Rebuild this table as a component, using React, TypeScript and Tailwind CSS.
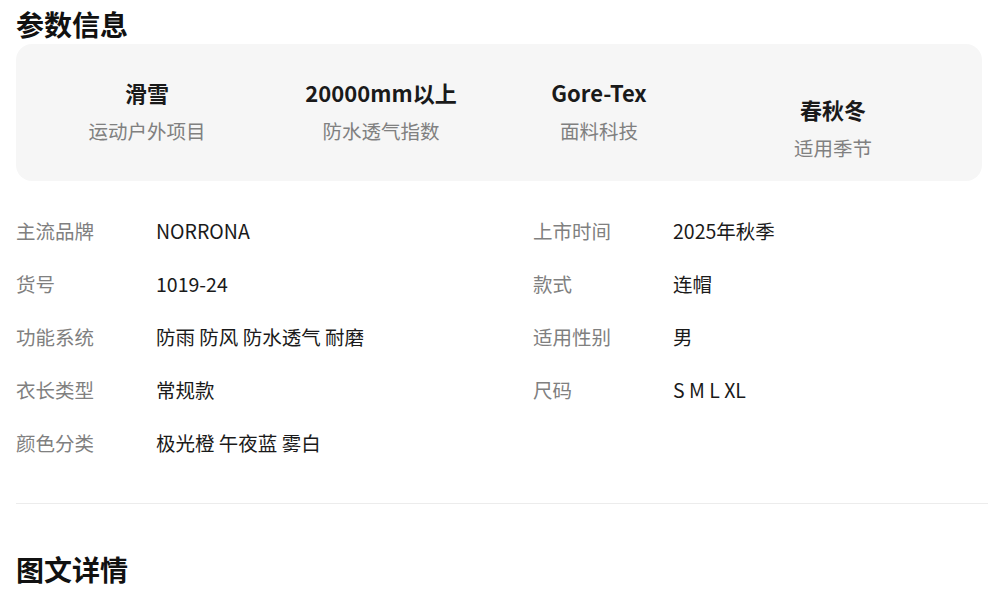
import React from 'react';

const highlights = [
  { value: '滑雪', label: '运动户外项目', offset: false },
  { value: '20000mm以上', label: '防水透气指数', offset: false },
  { value: 'Gore-Tex', label: '面料科技', offset: false },
  { value: '春秋冬', label: '适用季节', offset: true },
];

const leftSpecs = [
  ['主流品牌', 'NORRONA'],
  ['货号', '1019-24'],
  ['功能系统', '防雨 防风 防水透气 耐磨'],
  ['衣长类型', '常规款'],
  ['颜色分类', '极光橙 午夜蓝 雾白'],
];

const rightSpecs = [
  ['上市时间', '2025年秋季'],
  ['款式', '连帽'],
  ['适用性别', '男'],
  ['尺码', 'S M L XL'],
];

function SpecRow({ label, value }: { label: string; value: string }) {
  return (
    <div className="flex h-[53px] items-center">
      <span className="w-[140px] shrink-0 text-[19.5px] text-[#808080]">{label}</span>
      <span className="text-[19.5px] text-[#1a1a1a]">{value}</span>
    </div>
  );
}

export default function App() {
  return (
    <div className="min-h-screen bg-white pl-4 pr-[6px] font-['Noto_Sans_CJK_SC',sans-serif]">
      <h2 className="pt-[4px] text-[28px] font-bold leading-[40px] text-[#111]">参数信息</h2>

      <div className="grid h-[137px] grid-cols-[262px_206px_230px_238px] items-center rounded-2xl bg-[#f6f6f6]">
        {highlights.map((h) => (
          <div key={h.label} className={`flex flex-col items-center pb-[4px] ${h.offset ? 'pt-[34px]' : ''}`}>
            <div className="text-[22px] font-bold leading-[30px] text-[#1a1a1a]">{h.value}</div>
            <div className="mt-[11px] text-[19.5px] leading-[26px] text-[#808080]">{h.label}</div>
          </div>
        ))}
      </div>

      <div className="mt-[23px] grid grid-cols-[517px_1fr]">
        <div>
          {leftSpecs.map(([l, v]) => (
            <SpecRow key={l} label={l} value={v} />
          ))}
        </div>
        <div>
          {rightSpecs.map(([l, v]) => (
            <SpecRow key={l} label={l} value={v} />
          ))}
        </div>
      </div>

      <div className="mr-[-6px] mt-[34px] border-t border-[#ececec]" />

      <h2 className="mt-[45px] text-[28px] font-bold leading-[40px] text-[#111]">图文详情</h2>
    </div>
  );
}
